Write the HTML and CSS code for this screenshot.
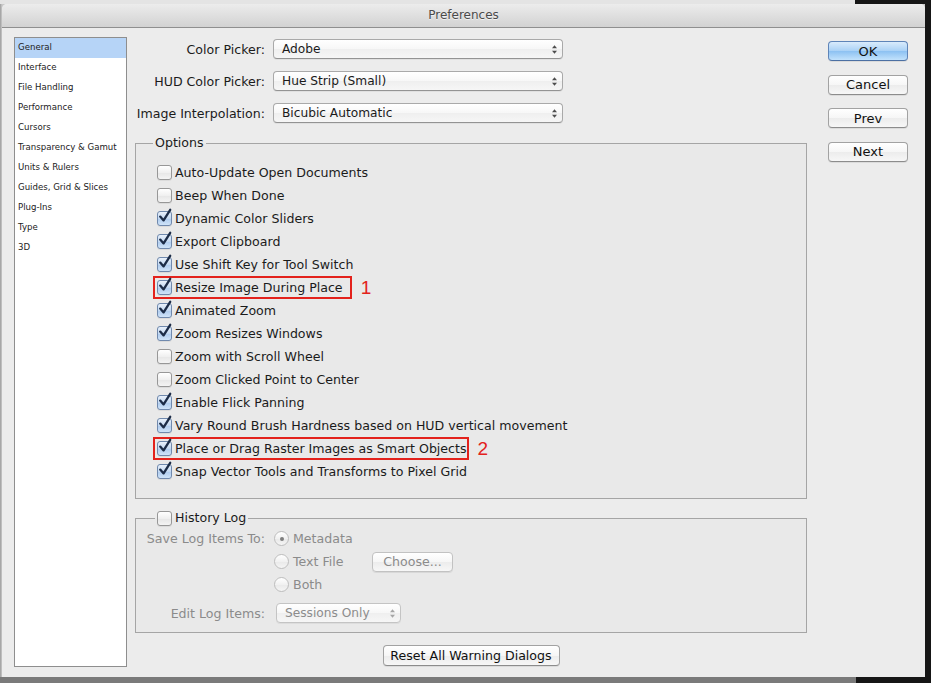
FILE: index.html
```html
<!DOCTYPE html>
<html>
<head>
<meta charset="utf-8">
<title>Preferences</title>
<link rel="stylesheet" href="styles.css">
</head>
<body>
<div class="window">
  <div class="titlebar">Preferences</div>
  <div class="content">
    <ul class="sidebar">
      <li class="sel">General</li>
      <li>Interface</li>
      <li>File Handling</li>
      <li>Performance</li>
      <li>Cursors</li>
      <li>Transparency &amp; Gamut</li>
      <li>Units &amp; Rulers</li>
      <li>Guides, Grid &amp; Slices</li>
      <li>Plug-Ins</li>
      <li>Type</li>
      <li>3D</li>
    </ul>

    <div class="main">
      <div class="pickers">
        <div class="field">
          <span class="flabel">Color Picker:</span>
          <div class="popup wide"><span class="ptext">Adobe</span><svg class="arrows" width="7" height="11" viewBox="0 0 7 11"><path d="M3.5 1.2 L6 4.2 H1 Z M3.5 9.8 L6 6.8 H1 Z"/></svg></div>
        </div>
        <div class="field">
          <span class="flabel">HUD Color Picker:</span>
          <div class="popup wide"><span class="ptext">Hue Strip (Small)</span><svg class="arrows" width="7" height="11" viewBox="0 0 7 11"><path d="M3.5 1.2 L6 4.2 H1 Z M3.5 9.8 L6 6.8 H1 Z"/></svg></div>
        </div>
        <div class="field">
          <span class="flabel">Image Interpolation:</span>
          <div class="popup wide"><span class="ptext">Bicubic Automatic</span><svg class="arrows" width="7" height="11" viewBox="0 0 7 11"><path d="M3.5 1.2 L6 4.2 H1 Z M3.5 9.8 L6 6.8 H1 Z"/></svg></div>
        </div>
      </div>

      <fieldset class="group options">
        <legend>Options</legend>
        <div class="row"><label class="opt"><span class="cb"></span>Auto-Update Open Documents</label></div>
        <div class="row"><label class="opt"><span class="cb"></span>Beep When Done</label></div>
        <div class="row"><label class="opt"><span class="cb on"><svg viewBox="0 0 16 16"><path d="M3.2 7.6 L6.6 11.4 L13.2 0.8"/></svg></span>Dynamic Color Sliders</label></div>
        <div class="row"><label class="opt"><span class="cb on"><svg viewBox="0 0 16 16"><path d="M3.2 7.6 L6.6 11.4 L13.2 0.8"/></svg></span>Export Clipboard</label></div>
        <div class="row"><label class="opt"><span class="cb on"><svg viewBox="0 0 16 16"><path d="M3.2 7.6 L6.6 11.4 L13.2 0.8"/></svg></span>Use Shift Key for Tool Switch</label></div>
        <div class="row"><label class="opt mark mark1"><span class="cb on"><svg viewBox="0 0 16 16"><path d="M3.2 7.6 L6.6 11.4 L13.2 0.8"/></svg></span>Resize Image During Place</label><span class="num">1</span></div>
        <div class="row"><label class="opt"><span class="cb on"><svg viewBox="0 0 16 16"><path d="M3.2 7.6 L6.6 11.4 L13.2 0.8"/></svg></span>Animated Zoom</label></div>
        <div class="row"><label class="opt"><span class="cb on"><svg viewBox="0 0 16 16"><path d="M3.2 7.6 L6.6 11.4 L13.2 0.8"/></svg></span>Zoom Resizes Windows</label></div>
        <div class="row"><label class="opt"><span class="cb"></span>Zoom with Scroll Wheel</label></div>
        <div class="row"><label class="opt"><span class="cb"></span>Zoom Clicked Point to Center</label></div>
        <div class="row"><label class="opt"><span class="cb on"><svg viewBox="0 0 16 16"><path d="M3.2 7.6 L6.6 11.4 L13.2 0.8"/></svg></span>Enable Flick Panning</label></div>
        <div class="row"><label class="opt"><span class="cb on"><svg viewBox="0 0 16 16"><path d="M3.2 7.6 L6.6 11.4 L13.2 0.8"/></svg></span>Vary Round Brush Hardness based on HUD vertical movement</label></div>
        <div class="row"><label class="opt mark mark2"><span class="cb on"><svg viewBox="0 0 16 16"><path d="M3.2 7.6 L6.6 11.4 L13.2 0.8"/></svg></span>Place or Drag Raster Images as Smart Objects</label><span class="num">2</span></div>
        <div class="row"><label class="opt"><span class="cb on"><svg viewBox="0 0 16 16"><path d="M3.2 7.6 L6.6 11.4 L13.2 0.8"/></svg></span>Snap Vector Tools and Transforms to Pixel Grid</label></div>
      </fieldset>

      <fieldset class="group history">
        <legend><span class="cb"></span>History Log</legend>
        <div class="loggrid">
          <span class="dlabel">Save Log Items To:</span>
          <span class="radioopt"><span class="radio on"></span>Metadata</span>
          <span></span>
          <span></span>
          <span class="radioopt"><span class="radio"></span>Text File</span>
          <button class="btn choose" disabled>Choose...</button>
          <span></span>
          <span class="radioopt"><span class="radio"></span>Both</span>
          <span></span>
        </div>
        <div class="editrow">
          <span class="dlabel">Edit Log Items:</span>
          <div class="popup small disabled"><span class="ptext">Sessions Only</span><svg class="arrows" width="7" height="11" viewBox="0 0 7 11"><path d="M3.5 1.2 L6 4.2 H1 Z M3.5 9.8 L6 6.8 H1 Z"/></svg></div>
        </div>
      </fieldset>

      <div class="resetwrap"><button class="btn reset">Reset All Warning Dialogs</button></div>
    </div>

    <div class="actions">
      <button class="btn default">OK</button>
      <button class="btn">Cancel</button>
      <button class="btn">Prev</button>
      <button class="btn">Next</button>
    </div>
  </div>
</div>
</body>
</html>
```

FILE: styles.css
```css
* { box-sizing: border-box; }

html, body { margin: 0; }

body {
  width: 931px;
  height: 683px;
  overflow: hidden;
  padding: 4px 6px 6px 2px;
  font-family: "DejaVu Sans", sans-serif;
  color: #1b1b1b;
  background:
    linear-gradient(to right, #e4e4e4 0, #e4e4e4 855px, #161616 855px) top left / 100% 4px no-repeat,
    linear-gradient(to right, #7a7a7a 0, #7a7a7a 856px, #161616 856px) bottom left / 100% 6px no-repeat,
    linear-gradient(to right, #9c9c9c 0, #c9c9c9 2px, #c9c9c9 925px, #161616 925px);
}

.window {
  width: 923px;
  height: 673px;
  background: #ececec;
  border-radius: 5px 5px 0 0;
  display: flex;
  flex-direction: column;
  overflow: hidden;
}

.titlebar {
  height: 24px;
  flex: none;
  border-bottom: 1px solid #8f8f8f;
  background: linear-gradient(#ececec, #d2d2d2);
  text-align: center;
  font-size: 12px;
  line-height: 23px;
  color: #4a4a4a;
  text-shadow: 0 1px 0 rgba(255,255,255,.6);
}

.content {
  flex: 1;
  display: flex;
  padding: 9px 17px 10px 12px;
}

/* sidebar */
.sidebar {
  width: 113px;
  flex: none;
  margin: 0;
  padding: 0;
  list-style: none;
  background: #fff;
  border: 1px solid #8e8e8e;
  font-size: 8.6px;
}
.sidebar li {
  height: 20px;
  line-height: 19px;
  padding-left: 3px;
  color: #222;
  white-space: nowrap;
}
.sidebar li.sel { background: #b6d4f7; }

/* main */
.main {
  width: 672px;
  flex: none;
  margin-left: 8px;
  display: flex;
  flex-direction: column;
}

.pickers {
  margin-top: 2px;
  display: flex;
  flex-direction: column;
  gap: 12px;
}
.field {
  display: flex;
  align-items: center;
  height: 20px;
}
.flabel {
  width: 130px;
  margin-right: 8px;
  text-align: right;
  font-size: 12.6px;
  white-space: nowrap;
}

.popup {
  height: 20px;
  display: flex;
  align-items: center;
  padding: 0 4px 0 8px;
  border: 1px solid #a9a9a9;
  border-bottom-color: #939393;
  border-radius: 4px;
  background: linear-gradient(#ffffff, #f7f7f7 50%, #efefef 51%, #f6f6f6);
  box-shadow: 0 1px 0 rgba(0,0,0,.05);
  font-size: 12.2px;
  white-space: nowrap;
}
.popup.wide { width: 290px; }
.popup .ptext { flex: 1; }
.popup .arrows { flex: none; fill: #4d4d4d; }
.popup.small { width: 125px; margin-left: 3px; }
.popup.disabled { color: #8c8c8c; border-color: #c4c4c4; }
.popup.disabled .arrows { fill: #a5a5a5; }

/* groups */
.group {
  margin: 12px 0 0;
  min-width: 0;
  border: 1px solid #a5a5a5;
  background: #e9e9e9;
}
.group legend {
  padding: 0 2px;
  height: 16px;
  font-size: 12.6px;
  line-height: 16px;
}

.options { padding: 10px 0 15px 17px; }

.row {
  display: flex;
  align-items: center;
  height: 23px;
}
.opt {
  display: flex;
  align-items: center;
  height: 23px;
  border: 2px solid transparent;
  padding: 0 4px 0 2px;
  font-size: 12.6px;
  white-space: nowrap;
}
.opt.mark { border-color: #e3221c; }
.opt.mark1 { padding-right: 7px; }
.opt.mark2 { padding-right: 0; }

.num {
  margin-left: 9px;
  color: #e3221c;
  font-family: "Liberation Sans", sans-serif;
  font-size: 19px;
  line-height: 23px;
}

.cb {
  position: relative;
  flex: none;
  width: 15px;
  height: 15px;
  margin-right: 3px;
  border: 1px solid #979797;
  border-radius: 3px;
  background: linear-gradient(#ffffff, #f0f0f0 50%, #e6e6e6 51%, #f4f4f4);
  box-shadow: 0 1px 0 rgba(0,0,0,.06);
}
.cb.on {
  border-color: #7089ad;
  background: linear-gradient(#e9f1fb, #c4d9f2 50%, #aecbee 51%, #cfe3f8);
}
.cb svg {
  position: absolute;
  left: -1px;
  top: -3px;
  width: 16px;
  height: 16px;
  overflow: visible;
}
.cb svg path {
  fill: none;
  stroke: #1c2c47;
  stroke-width: 2.3;
  stroke-linecap: round;
  stroke-linejoin: round;
}

/* history */
.history {
  margin-top: 11px;
  padding: 1px 0 9px 7px;
}
.history legend {
  margin-left: 12px;
  display: flex;
  align-items: center;
}

.loggrid {
  display: grid;
  grid-template-columns: 130px 99px auto;
  grid-auto-rows: 23px;
  align-items: center;
}
.dlabel {
  width: 130px;
  padding-right: 8px;
  text-align: right;
  color: #8b8b8b;
  font-size: 12.6px;
  white-space: nowrap;
}
.radioopt {
  display: flex;
  align-items: center;
  color: #8b8b8b;
  font-size: 12.6px;
  white-space: nowrap;
}
.radio {
  flex: none;
  width: 15px;
  height: 15px;
  margin: 0 4px 0 1px;
  border: 1px solid #bdbdbd;
  border-radius: 50%;
  background: linear-gradient(#ffffff, #f1f1f1 50%, #e9e9e9 51%, #f5f5f5);
  display: flex;
  align-items: center;
  justify-content: center;
}
.radio.on::after {
  content: "";
  width: 4px;
  height: 4px;
  border-radius: 50%;
  background: #7e7e7e;
}

.editrow {
  display: flex;
  align-items: center;
  height: 20px;
  margin-top: 7px;
}

/* buttons */
.btn {
  height: 20px;
  padding: 0;
  font-family: "DejaVu Sans", sans-serif;
  font-size: 12.6px;
  color: #111;
  border: 1px solid #a2a2a2;
  border-bottom-color: #8c8c8c;
  border-radius: 4px;
  background: linear-gradient(#ffffff, #f6f6f6 50%, #ececec 51%, #f7f7f7);
  box-shadow: 0 1px 0 rgba(0,0,0,.07);
}
.btn.default {
  border-color: #5e84b8;
  border-bottom-color: #4c70a3;
  background: linear-gradient(#d9ebfc, #a9d1f6 50%, #8cc1f2 51%, #c2e2fc);
}
.btn.choose {
  width: 81px;
  color: #8b8b8b;
  border-color: #c2c2c2;
}
.btn.reset {
  width: 177px;
  height: 21px;
}

.resetwrap {
  margin-top: 12px;
  display: flex;
  justify-content: center;
}

.actions {
  width: 80px;
  flex: none;
  margin-left: 21px;
  padding-top: 4px;
  display: flex;
  flex-direction: column;
  gap: 13.67px;
}
.actions .btn { width: 80px; font-size: 13px; }
```
